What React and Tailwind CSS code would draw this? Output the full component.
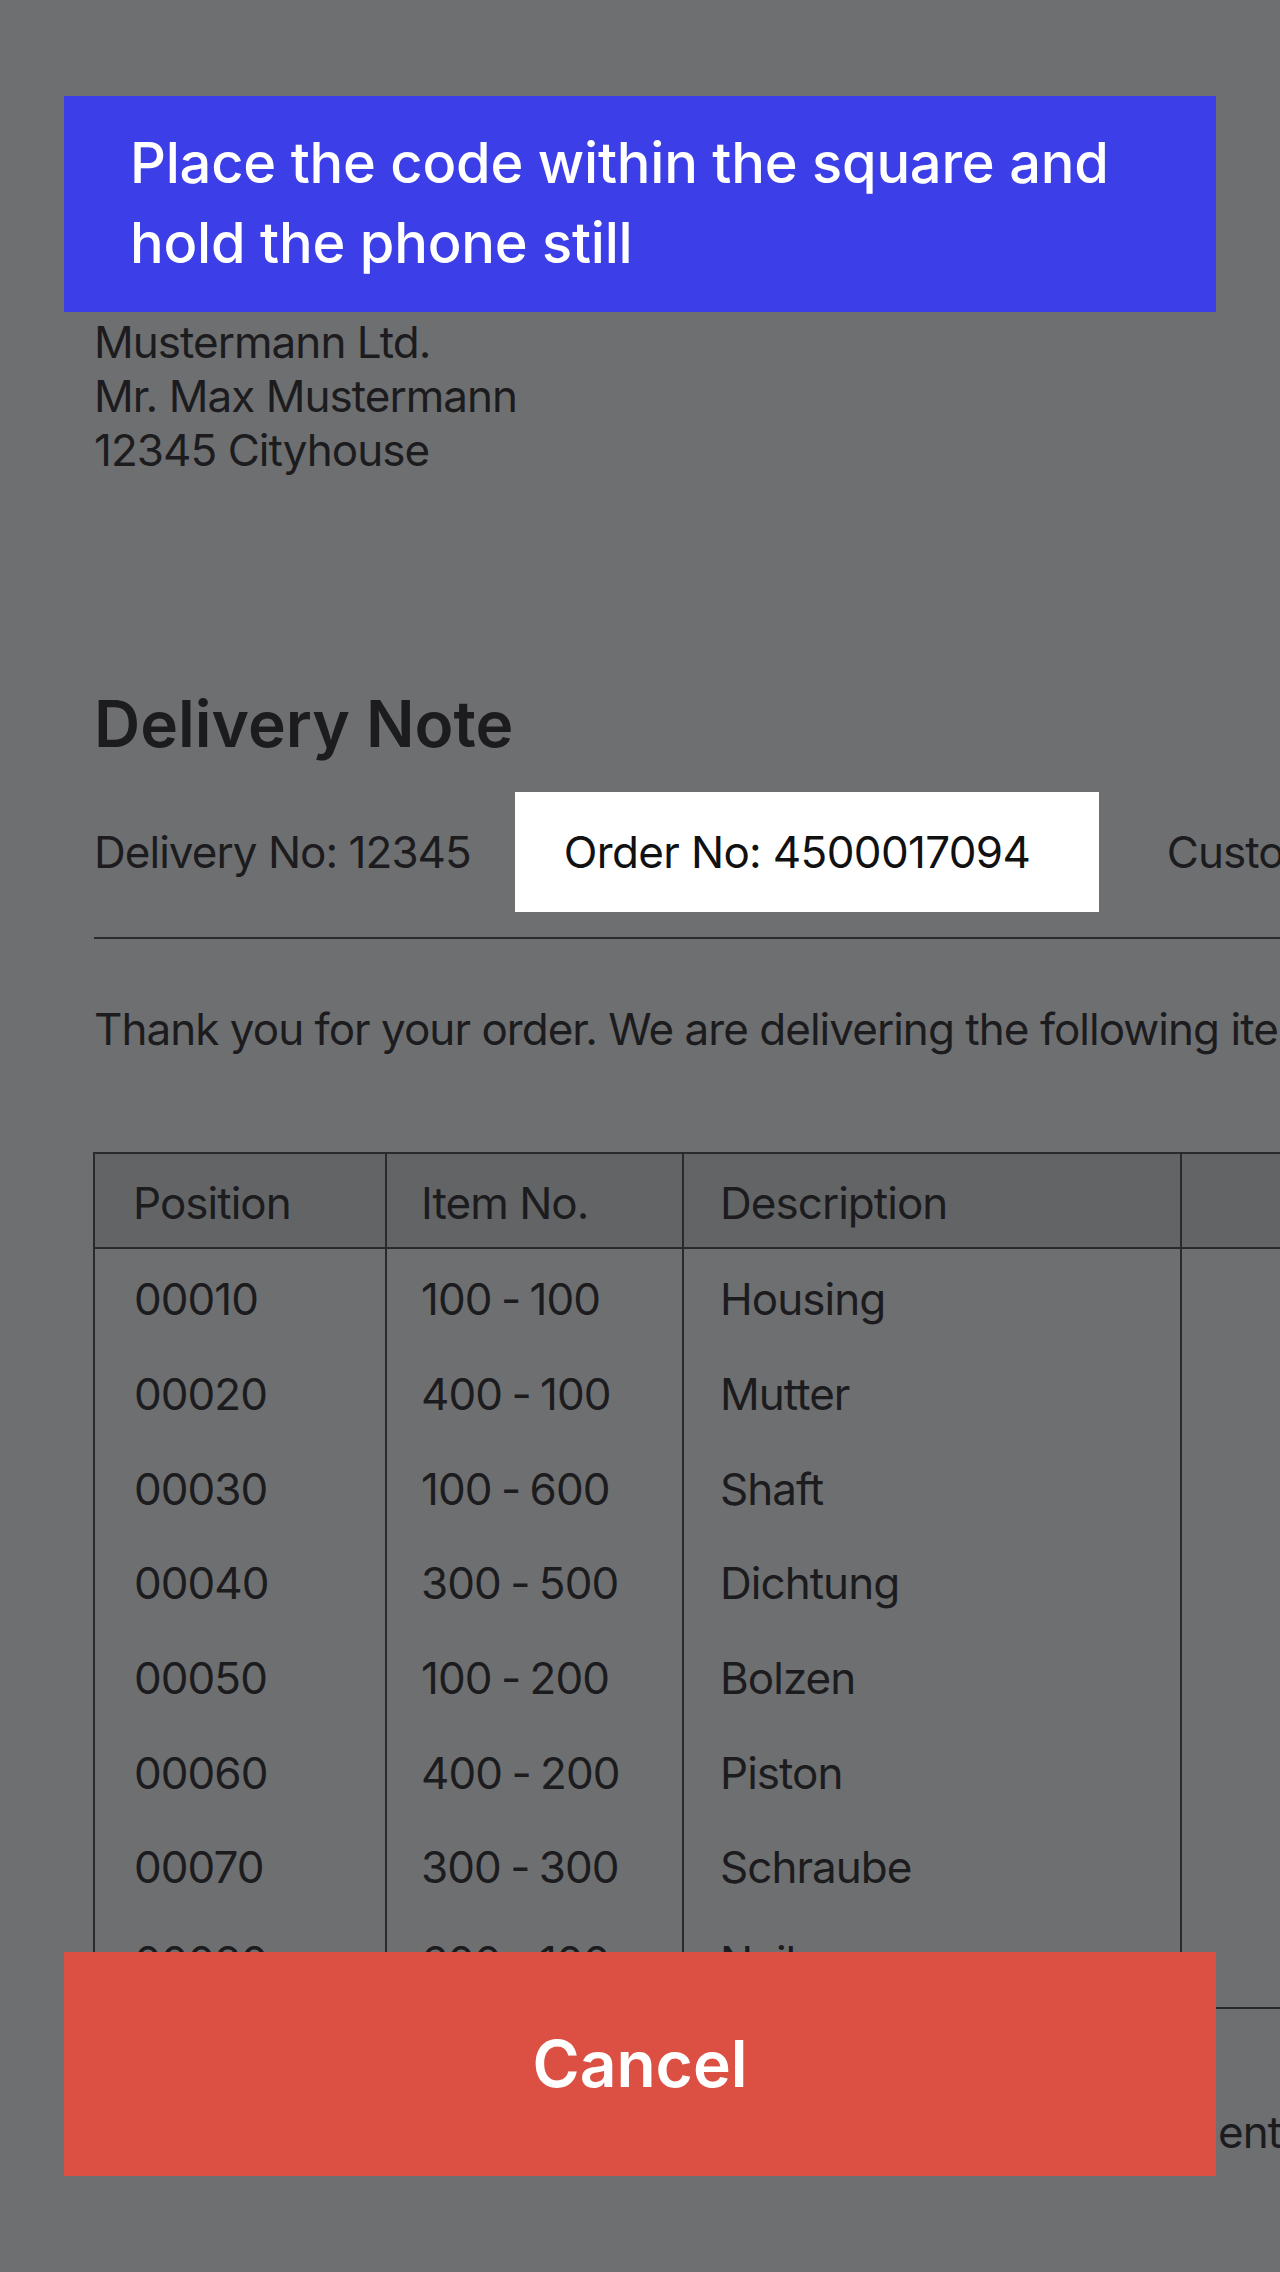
export default function App() {
  const rows = [
    ["00010", "100 - 100", "Housing"],
    ["00020", "400 - 100", "Mutter"],
    ["00030", "100 - 600", "Shaft"],
    ["00040", "300 - 500", "Dichtung"],
    ["00050", "100 - 200", "Bolzen"],
    ["00060", "400 - 200", "Piston"],
    ["00070", "300 - 300", "Schraube"],
    ["00080", "600 - 100", "Nail"],
  ];
  return (
    <div className="relative w-[1280px] h-[2272px] overflow-hidden bg-[#6e6f71] font-['Inter','Noto_Sans',sans-serif]">
      <div className="pl-[94px] pt-[315px] text-[#1c1c1e] text-[44px] leading-[54px] tracking-[-0.022em] whitespace-nowrap">
        <p>Mustermann Ltd.</p>
        <p>Mr. Max Mustermann</p>
        <p>12345 Cityhouse</p>
        <h1 className="mt-[208px] text-[64px] leading-[77px] font-semibold tracking-normal">Delivery Note</h1>
        <div className="mt-[30px] flex items-center h-[120px]">
          <span>Delivery No: 12345</span>
          <div className="ml-[44px] w-[584px] h-[120px] shrink-0 bg-white text-[#111] flex items-center pl-[49px] tracking-[-0.015em]">
            Order No: 4500017094
          </div>
          <span className="ml-[68px]">Customer No: 98765</span>
        </div>
        <div className="mt-[25px] h-[2px] bg-[#2a2a2c]" />
        <p className="mt-[63px]">Thank you for your order. We are delivering the following items:</p>
        <div className="mt-[96px] -ml-[1px] w-[1400px] border-l-2 border-t-2 border-b-2 border-[#2a2a2c]">
          <div className="grid grid-cols-[292px_297px_498px_1fr] h-[95px] bg-[#636466] border-b-2 border-[#2a2a2c]">
            <div className="border-r-2 border-[#2a2a2c] pl-[38px] flex items-center pt-[4px]">Position</div>
            <div className="border-r-2 border-[#2a2a2c] pl-[34px] flex items-center pt-[4px]">Item No.</div>
            <div className="border-r-2 border-[#2a2a2c] pl-[36px] flex items-center pt-[4px]">Description</div>
            <div />
          </div>
          {rows.map((r) => (
            <div key={r[0]} className="grid grid-cols-[292px_297px_498px_1fr] h-[94.7px]">
              <div className="border-r-2 border-[#2a2a2c] pl-[39px] flex items-center pt-[6px]">{r[0]}</div>
              <div className="border-r-2 border-[#2a2a2c] pl-[34px] flex items-center pt-[6px] [word-spacing:-2px]">{r[1]}</div>
              <div className="border-r-2 border-[#2a2a2c] pl-[36px] flex items-center pt-[6px]">{r[2]}</div>
              <div />
            </div>
          ))}
        </div>
        <p className="mt-[96px] flex">
          <span className="w-[1118px] mr-[6px] shrink-0 overflow-hidden">Please check the goods upon receipt and confirm the consignm</span>
          <span>ent</span>
        </p>
      </div>

      <div className="absolute left-[64px] top-[96px] w-[1152px] h-[216px] bg-[#3c3fe8] pl-[66px] pr-[40px] pt-[27px] text-white text-[56px] leading-[80px] font-medium tracking-[-0.004em]">
        Place the code within the square and hold the phone still
      </div>

      <button className="absolute left-[64px] top-[1952px] w-[1152px] h-[224px] bg-[#dc5044] flex items-center justify-center text-white text-[64px] font-semibold">
        Cancel
      </button>
    </div>
  );
}
